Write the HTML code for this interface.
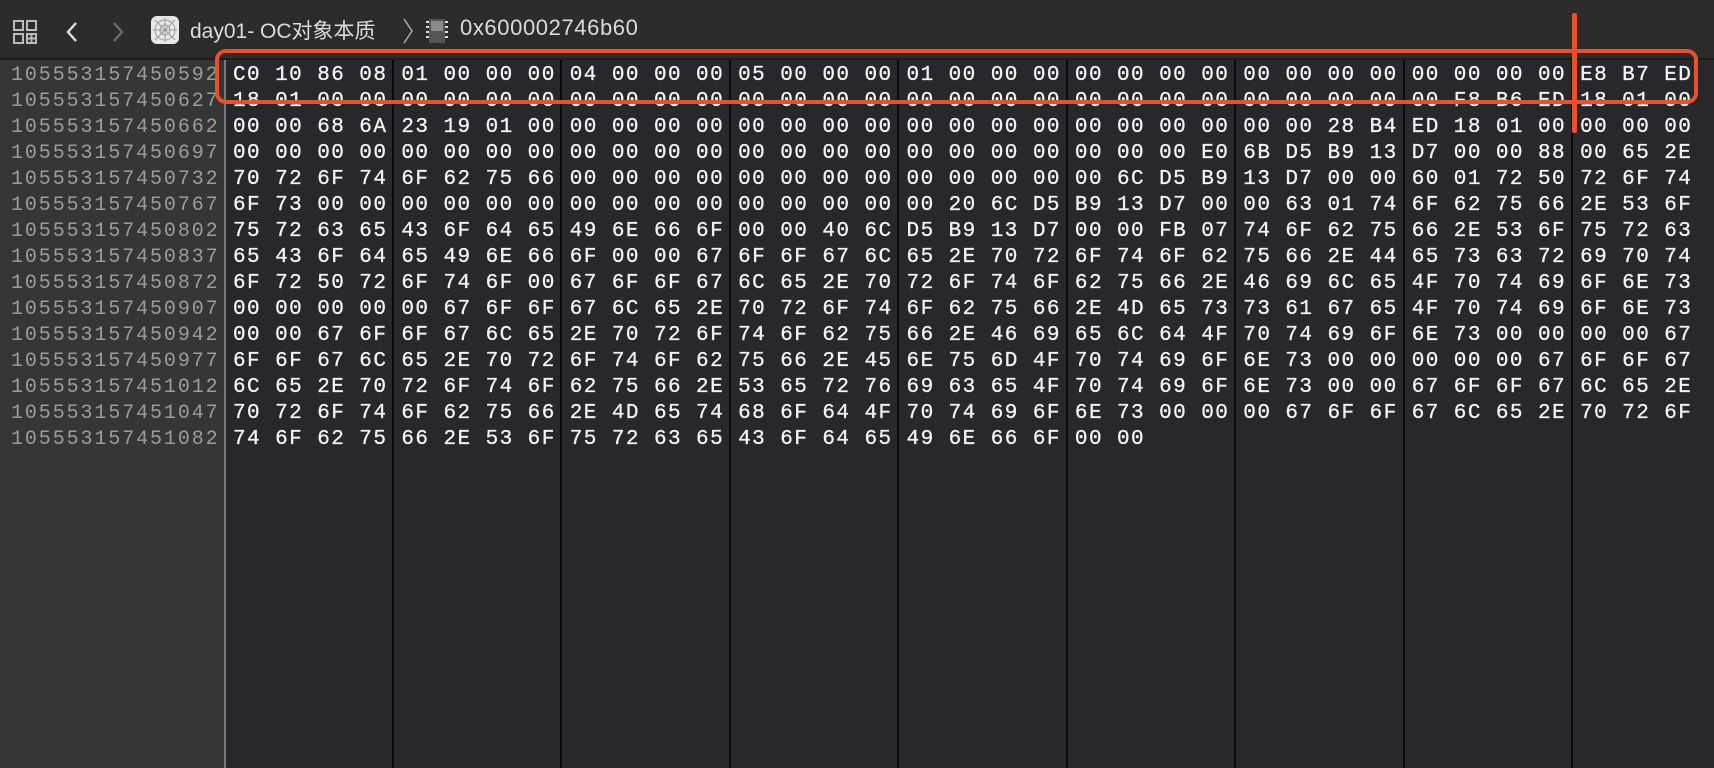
<!DOCTYPE html>
<html><head><meta charset="utf-8"><style>
body{margin:0;width:1714px;height:768px;overflow:hidden;background:#28282c;position:relative;font-family:"Liberation Mono",monospace}
#tb{position:absolute;left:0;top:0;width:1714px;height:58px;background:#2d2c2a;border-bottom:2px solid #1c1c1c}
#tb .t{position:absolute;top:15px;font-family:"Liberation Sans","Noto Sans CJK SC",sans-serif;font-size:21px;color:#dcdcdc}
#addr{position:absolute;left:0;top:60px;width:224px;height:708px;background:#363636;border-right:2px solid #7a7a7a}
.a{position:absolute;left:11px;font-size:20px;letter-spacing:1.9px;color:#9c9c9c;line-height:26px;white-space:pre}
.h{position:absolute;left:233px;font-size:21px;letter-spacing:1.43px;color:#f4f4f4;line-height:26px;white-space:pre;-webkit-text-stroke:0.3px #f4f4f4}
.g{position:absolute;top:60px;width:2px;height:708px;background:#0a0a0a}
</style></head><body>
<div id="tb">
<svg style="position:absolute;left:12px;top:19px" width="26" height="26" viewBox="0 0 26 26" fill="none" stroke="#bbb" stroke-width="2"><rect x="2" y="2" width="9" height="9"/><rect x="15" y="2" width="9" height="9"/><rect x="2" y="15" width="9" height="9"/><path d="M15 15h9v9h-9z M19.5 15v9 M15 19.5h9"/></svg>
<svg style="position:absolute;left:64px;top:20px" width="16" height="24"><path d="M12 3L4 12l8 9" stroke="#e0e0e0" stroke-width="2.4" fill="none"/></svg>
<svg style="position:absolute;left:110px;top:20px" width="16" height="24"><path d="M4 3l8 9-8 9" stroke="#6a6a6a" stroke-width="2.4" fill="none"/></svg>
<svg style="position:absolute;left:150px;top:15px" width="30" height="30"><rect x="1" y="1" width="28" height="28" rx="6" fill="#e8e8e8"/><g stroke="#9a9a9a" stroke-width="1" fill="none"><circle cx="15" cy="15" r="10"/><circle cx="15" cy="15" r="5"/><path d="M3 15h24M15 3v24M5 5l20 20M25 5L5 25"/></g></svg>
<div class="t" style="left:190px">day01- OC对象本质</div>
<svg style="position:absolute;left:402px;top:17px" width="12" height="28"><path d="M2 2l8 12-8 12" stroke="#aaa" stroke-width="1.5" fill="none"/></svg>
<svg style="position:absolute;left:425px;top:17px" width="24" height="28"><rect x="4" y="2" width="16" height="24" fill="#555"/><rect x="6" y="4" width="12" height="10" fill="#8a8a8a"/><g fill="#ddd"><rect x="1" y="4" width="3" height="2"/><rect x="1" y="9" width="3" height="2"/><rect x="1" y="14" width="3" height="2"/><rect x="1" y="19" width="3" height="2"/><rect x="20" y="4" width="3" height="2"/><rect x="20" y="9" width="3" height="2"/><rect x="20" y="14" width="3" height="2"/><rect x="20" y="19" width="3" height="2"/></g></svg>
<div class="t" style="left:460px;font-size:22px;letter-spacing:0.6px">0x600002746b60</div>
</div>
<div id="addr"></div>
<div class="g" style="left:392px"></div><div class="g" style="left:560px"></div><div class="g" style="left:729px"></div><div class="g" style="left:897px"></div><div class="g" style="left:1066px"></div><div class="g" style="left:1234px"></div><div class="g" style="left:1403px"></div><div class="g" style="left:1571px"></div>
<div class="a" style="top:63px">105553157450592</div>
<div class="a" style="top:89px">105553157450627</div>
<div class="a" style="top:115px">105553157450662</div>
<div class="a" style="top:141px">105553157450697</div>
<div class="a" style="top:167px">105553157450732</div>
<div class="a" style="top:193px">105553157450767</div>
<div class="a" style="top:219px">105553157450802</div>
<div class="a" style="top:245px">105553157450837</div>
<div class="a" style="top:271px">105553157450872</div>
<div class="a" style="top:297px">105553157450907</div>
<div class="a" style="top:323px">105553157450942</div>
<div class="a" style="top:349px">105553157450977</div>
<div class="a" style="top:375px">105553157451012</div>
<div class="a" style="top:401px">105553157451047</div>
<div class="a" style="top:427px">105553157451082</div>
<div class="h" style="top:63px">C0 10 86 08 01 00 00 00 04 00 00 00 05 00 00 00 01 00 00 00 00 00 00 00 00 00 00 00 00 00 00 00 E8 B7 ED</div>
<div class="h" style="top:89px">18 01 00 00 00 00 00 00 00 00 00 00 00 00 00 00 00 00 00 00 00 00 00 00 00 00 00 00 00 F8 B6 ED 18 01 00</div>
<div class="h" style="top:115px">00 00 68 6A 23 19 01 00 00 00 00 00 00 00 00 00 00 00 00 00 00 00 00 00 00 00 28 B4 ED 18 01 00 00 00 00</div>
<div class="h" style="top:141px">00 00 00 00 00 00 00 00 00 00 00 00 00 00 00 00 00 00 00 00 00 00 00 E0 6B D5 B9 13 D7 00 00 88 00 65 2E</div>
<div class="h" style="top:167px">70 72 6F 74 6F 62 75 66 00 00 00 00 00 00 00 00 00 00 00 00 00 6C D5 B9 13 D7 00 00 60 01 72 50 72 6F 74</div>
<div class="h" style="top:193px">6F 73 00 00 00 00 00 00 00 00 00 00 00 00 00 00 00 20 6C D5 B9 13 D7 00 00 63 01 74 6F 62 75 66 2E 53 6F</div>
<div class="h" style="top:219px">75 72 63 65 43 6F 64 65 49 6E 66 6F 00 00 40 6C D5 B9 13 D7 00 00 FB 07 74 6F 62 75 66 2E 53 6F 75 72 63</div>
<div class="h" style="top:245px">65 43 6F 64 65 49 6E 66 6F 00 00 67 6F 6F 67 6C 65 2E 70 72 6F 74 6F 62 75 66 2E 44 65 73 63 72 69 70 74</div>
<div class="h" style="top:271px">6F 72 50 72 6F 74 6F 00 67 6F 6F 67 6C 65 2E 70 72 6F 74 6F 62 75 66 2E 46 69 6C 65 4F 70 74 69 6F 6E 73</div>
<div class="h" style="top:297px">00 00 00 00 00 67 6F 6F 67 6C 65 2E 70 72 6F 74 6F 62 75 66 2E 4D 65 73 73 61 67 65 4F 70 74 69 6F 6E 73</div>
<div class="h" style="top:323px">00 00 67 6F 6F 67 6C 65 2E 70 72 6F 74 6F 62 75 66 2E 46 69 65 6C 64 4F 70 74 69 6F 6E 73 00 00 00 00 67</div>
<div class="h" style="top:349px">6F 6F 67 6C 65 2E 70 72 6F 74 6F 62 75 66 2E 45 6E 75 6D 4F 70 74 69 6F 6E 73 00 00 00 00 00 67 6F 6F 67</div>
<div class="h" style="top:375px">6C 65 2E 70 72 6F 74 6F 62 75 66 2E 53 65 72 76 69 63 65 4F 70 74 69 6F 6E 73 00 00 67 6F 6F 67 6C 65 2E</div>
<div class="h" style="top:401px">70 72 6F 74 6F 62 75 66 2E 4D 65 74 68 6F 64 4F 70 74 69 6F 6E 73 00 00 00 67 6F 6F 67 6C 65 2E 70 72 6F</div>
<div class="h" style="top:427px">74 6F 62 75 66 2E 53 6F 75 72 63 65 43 6F 64 65 49 6E 66 6F 00 00</div>
<div style="position:absolute;left:215px;top:49px;width:1475px;height:47px;border:4px solid #e9502b;border-radius:11px"></div>
<div style="position:absolute;left:1572px;top:13px;width:5px;height:120px;background:#e9502b;border-radius:2px"></div>
</body></html>
